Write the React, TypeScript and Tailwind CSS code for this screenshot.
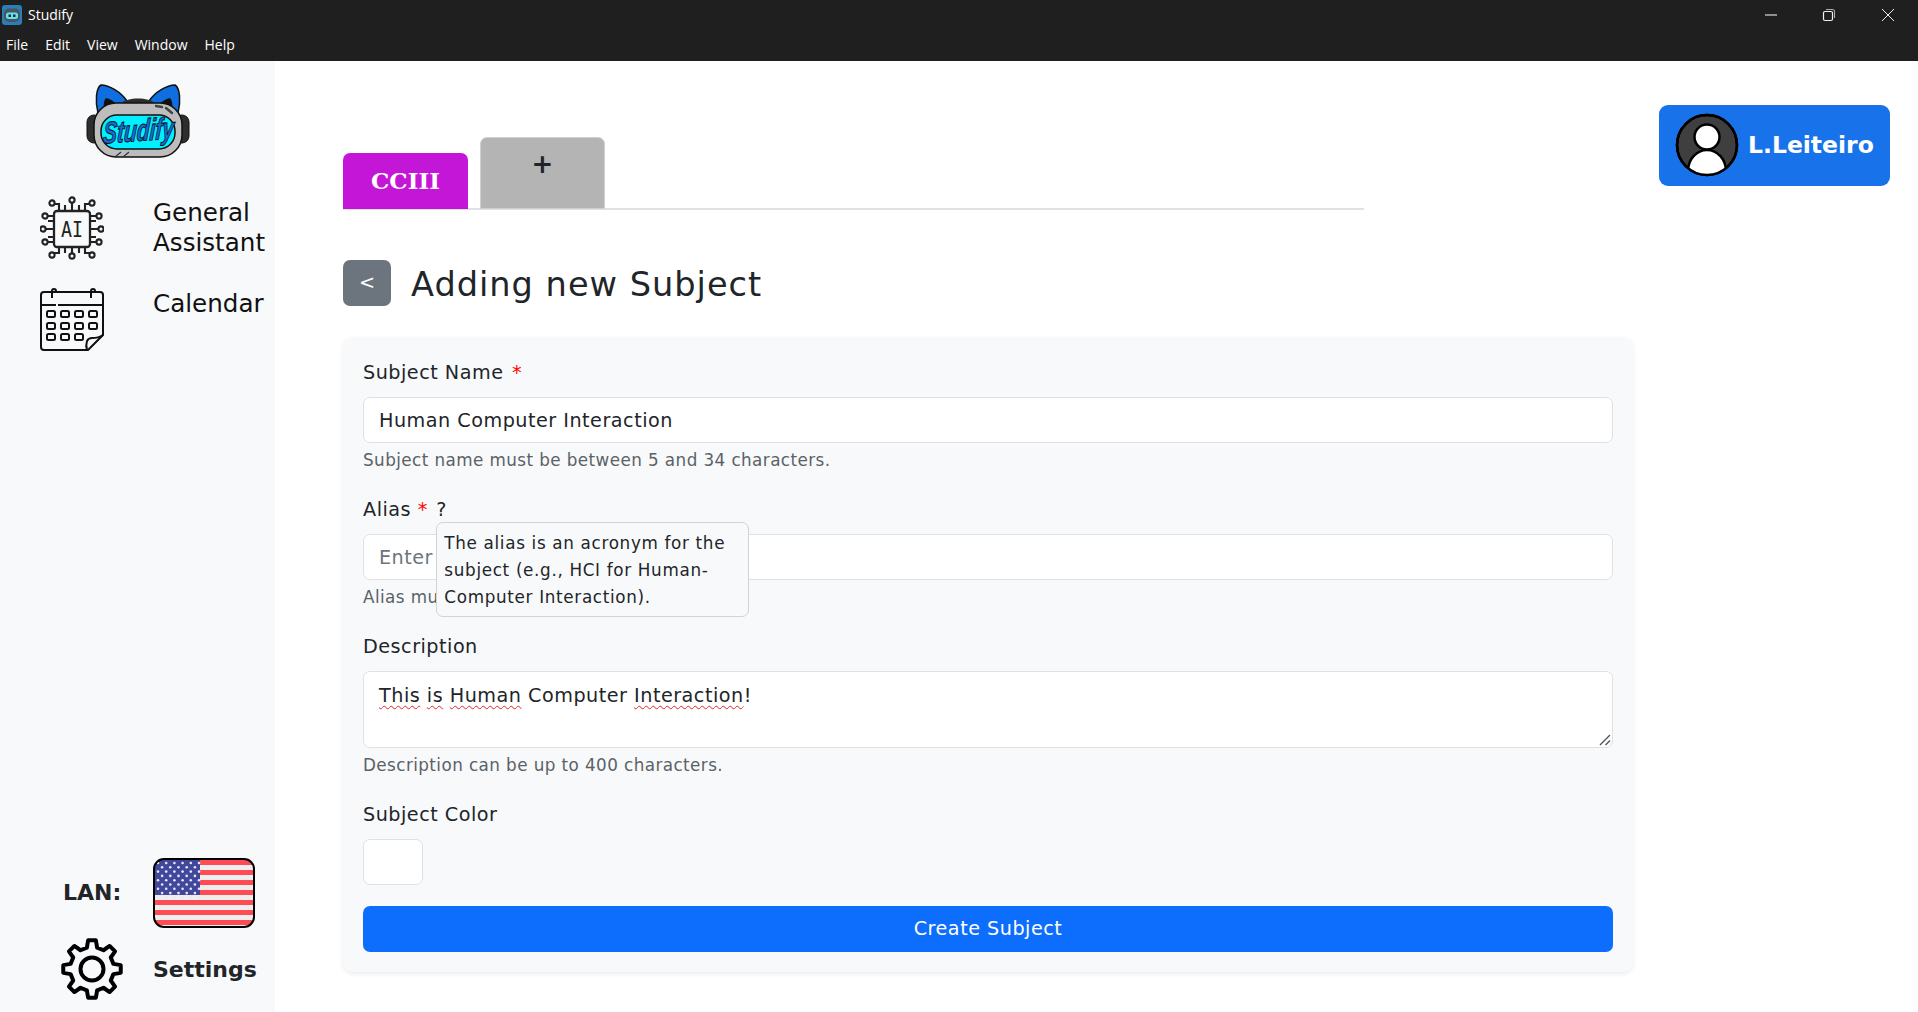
import React from "react";

const gearPath = (() => {
  const teeth = 8;
  const pts: string[] = [];
  for (let i = 0; i < teeth; i++) {
    const a = (i * Math.PI * 2) / teeth - Math.PI / 2;
    const step = (Math.PI * 2) / teeth;
    const ring: [number, number][] = [
      [22, a - step * 0.3],
      [29, a - step * 0.17],
      [29, a + step * 0.17],
      [22, a + step * 0.3],
    ];
    ring.forEach(([r, t]) => {
      pts.push(`${(32 + r * Math.cos(t)).toFixed(2)} ${(32 + r * Math.sin(t)).toFixed(2)}`);
    });
  }
  return `M${pts.join("L")}Z`;
})();

const AppIcon = () => (
  <svg width="20" height="20" viewBox="0 0 20 20" className="ml-[2px] mr-[6px]">
    <rect width="20" height="20" rx="3" fill="#2a7fb8" />
    <rect x="2" y="3.5" width="16" height="13.5" rx="5" fill="#4a5560" />
    <rect x="4" y="7.5" width="12" height="6.5" rx="2.5" fill="#5fe3ee" />
    <rect x="6.5" y="9.5" width="2.5" height="2.5" fill="#1c2b33" />
    <rect x="11" y="9.5" width="2.5" height="2.5" fill="#1c2b33" />
  </svg>
);

const WindowControls = () => (
  <div className="flex items-center">
    <svg width="14" height="14" viewBox="0 0 14 14" className="mr-[44px]">
      <path d="M1 7h12" stroke="#fff" strokeWidth="1" />
    </svg>
    <svg width="14" height="14" viewBox="0 0 14 14" className="mr-[45px]">
      <rect x="1.5" y="3.5" width="9" height="9" rx="1.5" fill="none" stroke="#eee" strokeWidth="1.2" />
      <path d="M4 1.5h6.5a2 2 0 0 1 2 2V10" fill="none" stroke="#aaa" strokeWidth="1.1" />
    </svg>
    <svg width="14" height="14" viewBox="0 0 14 14" className="mr-[23px]">
      <path d="M1 1l12 12M13 1L1 13" stroke="#eee" strokeWidth="1" />
    </svg>
  </div>
);

const Logo = () => (
  <svg width="104" height="76" viewBox="0 0 104 76">
    <path d="M12 30C9 18 10 5 15 2c8 0 20 7 26 16L20 30Z" fill="#0f6fe0" stroke="#111" strokeWidth="1.5" />
    <path d="M92 30c3-12 2-25-3-28-8 0-20 7-26 16l21 12Z" fill="#0f6fe0" stroke="#111" strokeWidth="1.5" />
    <path d="M18 28c-1-6 0-11 2-13 5 1 10 5 14 9Z" fill="#111" />
    <path d="M86 28c1-6 0-11-2-13-5 1-10 5-14 9Z" fill="#111" />
    <path d="M36 20c4-6 28-6 32 0v6H36Z" fill="#2d2d2d" />
    <rect x="1" y="32" width="14" height="28" rx="7" fill="#2e2e2e" stroke="#111" />
    <rect x="89" y="32" width="14" height="28" rx="7" fill="#2e2e2e" stroke="#111" />
    <rect x="8" y="20" width="88" height="54" rx="22" fill="#bdbdbd" stroke="#111" strokeWidth="1.5" />
    <rect x="15" y="32" width="74" height="34" rx="16" fill="#00f0ff" stroke="#111" strokeWidth="1.5" />
    <path d="M70 23l6 1M80 25l6 5" stroke="#444" strokeWidth="2.4" strokeLinecap="round" />
    <path d="M29 74l6-5M37 74l6-5" stroke="#333" strokeWidth="1.2" />
    <text
      x="0"
      y="0"
      textAnchor="middle"
      fontFamily="Liberation Sans, sans-serif"
      fontWeight="700"
      fontStyle="italic"
      fontSize="21"
      fill="#0f6fe0"
      stroke="#111"
      strokeWidth="0.7"
      transform="translate(52 58) rotate(-4) skewX(-8) scale(1 1.45)"
    >
      Studify
    </text>
  </svg>
);

const AiIcon = () => (
  <svg width="64" height="64" viewBox="0 0 64 64" fill="none" stroke="#222" strokeWidth="2.1">
    <rect x="14" y="15" width="36" height="36" rx="3" strokeWidth="2.3" />
    <text
      x="32"
      y="41"
      textAnchor="middle"
      fontFamily="DejaVu Sans Mono, monospace"
      fontSize="22"
      fill="#222"
      stroke="none"
      textLength="22"
      lengthAdjust="spacingAndGlyphs"
    >
      AI
    </text>
    <path d="M25 15V9M32 15V6M39 15V9M25 51v6M32 51v6M39 51v6M14 25H8M14 33H5M14 41H8M50 25h6M50 33h9M50 41h6" />
    <path d="M19 15V8h-5M45 15V8h5M19 51v6h-5M45 51v6h5M14 20H7M50 20h7M14 46H7M50 46h7" />
    <g fill="#f8f9fa">
      <circle cx="12" cy="7" r="2.6" />
      <circle cx="32" cy="4" r="2.6" />
      <circle cx="52" cy="7" r="2.6" />
      <circle cx="12" cy="59" r="2.6" />
      <circle cx="32" cy="60" r="2.6" />
      <circle cx="52" cy="59" r="2.6" />
      <circle cx="3" cy="33" r="2.6" />
      <circle cx="61" cy="33" r="2.6" />
      <circle cx="5" cy="20" r="2.6" />
      <circle cx="59" cy="20" r="2.6" />
      <circle cx="5" cy="46" r="2.6" />
      <circle cx="59" cy="46" r="2.6" />
    </g>
  </svg>
);

const CalendarIcon = () => {
  const cells = [0, 1, 2, 3];
  return (
    <svg width="64" height="65" viewBox="0 0 64 65" fill="none" stroke="#111" strokeWidth="2">
      <path d="M48 62H4a3 3 0 0 1-3-3V7a3 3 0 0 1 3-3h56a3 3 0 0 1 3 3v40Z" strokeLinejoin="round" />
      <path d="M47 62c-1-3-1-6 0-9 1-2 3-3 5-3 4 0 8-1 11-3" />
      <path d="M1 17h15M18 17h45" />
      <path d="M12 10V3a2 2 0 0 1 4 0M51 10V3a2 2 0 0 1 4 0" />
      {[23, 35, 46].map((y, row) =>
        cells.map((c) =>
          row === 2 && c === 3 ? null : <rect key={`${y}-${c}`} x={7 + c * 14} y={y} width="8" height="6" rx="1.5" />
        )
      )}
    </svg>
  );
};

const Flag = () => {
  const stripes = Array.from({ length: 7 }, (_, i) => i);
  const stars: [number, number][] = [];
  for (let r = 0; r < 9; r++) {
    for (let c = 0; c < (r % 2 ? 5 : 6); c++) {
      stars.push([5 + c * 8.2 + (r % 2 ? 4.1 : 0), 5 + r * 4.3]);
    }
  }
  return (
    <svg width="102" height="70" viewBox="0 0 102 70">
      <clipPath id="flagClip">
        <rect x="1" y="1" width="100" height="68" rx="10" />
      </clipPath>
      <g clipPath="url(#flagClip)">
        <rect width="102" height="70" fill="#eeeeee" />
        {stripes.map((i) => (
          <rect key={i} x="0" y={2 + i * 10} width="102" height="5" fill="#ff4b55" />
        ))}
        <rect x="0" y="0" width="47" height="37" fill="#41479b" />
        {stars.map(([x, y]) => (
          <circle key={`${x}-${y}`} cx={x} cy={y} r="1.3" fill="#e8e8f4" />
        ))}
      </g>
      <rect x="1" y="1" width="100" height="68" rx="10" fill="none" stroke="#000" strokeWidth="2" />
    </svg>
  );
};

const Gear = () => (
  <svg width="64" height="64" viewBox="0 0 64 64" fill="none" stroke="#000" strokeWidth="4" strokeLinejoin="round">
    <path d={gearPath} />
    <circle cx="32" cy="32" r="11.5" />
  </svg>
);

const Avatar = () => (
  <svg width="64" height="64" viewBox="0 0 64 64" className="shrink-0 -mt-[2px]">
    <clipPath id="avatarClip">
      <circle cx="32" cy="32" r="29.5" />
    </clipPath>
    <circle cx="32" cy="32" r="30" fill="#3f3f3f" stroke="#000" strokeWidth="2.5" />
    <g clipPath="url(#avatarClip)">
      <ellipse cx="32" cy="58" rx="19" ry="21" fill="#fff" stroke="#000" strokeWidth="2.5" />
    </g>
    <circle cx="32" cy="24" r="12.5" fill="#fff" stroke="#000" strokeWidth="2.5" />
    <circle cx="32" cy="32" r="30" fill="none" stroke="#000" strokeWidth="2.5" />
  </svg>
);

const Sidebar = () => (
  <aside className="w-[275px] shrink-0 bg-[#f8f9fa] flex flex-col text-[#111] font-['DejaVu_Sans',sans-serif]">
    <div className="flex justify-center pt-[22px]">
      <Logo />
    </div>
    <div className="flex gap-[49px] pl-[40px] mt-[37px]">
      <AiIcon />
      <span className="text-[24.6px] leading-[30px] pt-[2px] whitespace-nowrap">
        General
        <br />
        Assistant
      </span>
    </div>
    <div className="flex gap-[49px] pl-[40px] mt-[28px]">
      <CalendarIcon />
      <span className="text-[24.6px] leading-[30px] pt-[1px]">Calendar</span>
    </div>
    <div className="mt-auto flex items-center pb-[9px]">
      <span className="w-[153px] pl-[63px] pb-[2px] text-[22px] font-bold text-[#212529]">LAN:</span>
      <Flag />
    </div>
    <div className="flex items-center pb-[11px]">
      <div className="w-[153px] pl-[60px]">
        <Gear />
      </div>
      <span className="text-[22px] font-bold text-[#212529]">Settings</span>
    </div>
  </aside>
);

const fieldClass =
  "block w-full h-[46px] px-[15px] bg-white border border-[#dee2e6] rounded-[7px] text-[19.2px] tracking-[0.5px] text-[#212529] placeholder:text-[#6c757d] outline-none";

const Label = ({ children }: { children: React.ReactNode }) => (
  <label className="block text-[19.2px] tracking-[0.5px] leading-[29px] mb-[10px] text-[#212529]">{children}</label>
);

const Hint = ({ children }: { children: React.ReactNode }) => (
  <p className="mt-[5px] text-[16.8px] tracking-[0.42px] leading-[25px] text-[#5a6268]">{children}</p>
);

const Squiggle = ({ children }: { children: React.ReactNode }) => (
  <span className="underline decoration-wavy decoration-[#e0262c] decoration-1 underline-offset-[3px]">{children}</span>
);

const App = () => {
  return (
    <div className="h-screen flex flex-col overflow-hidden bg-white">
      <header className="h-[61px] shrink-0 bg-[#1f1f1f] text-white font-['Open_Sans',sans-serif] text-[14px]">
        <div className="h-[29px] flex items-center justify-between">
          <div className="flex items-center">
            <AppIcon />
            <span>Studify</span>
          </div>
          <WindowControls />
        </div>
        <nav className="flex gap-[17px] pl-[6px] pt-[5px] leading-[22px]">
          <span>File</span>
          <span>Edit</span>
          <span>View</span>
          <span>Window</span>
          <span>Help</span>
        </nav>
      </header>

      <div className="flex flex-1 min-h-0">
        <Sidebar />
        <main className="flex-1 flex font-['DejaVu_Sans',sans-serif] text-[#212529]">
          <div className="w-[1290px] ml-[68px] shrink-0">
            <div className="w-[1021px] mt-[76px] h-[73px] flex items-end gap-[12px] border-b-2 border-[#dee2e6]">
              <div className="w-[125px] h-[56px] -mb-[1px] rounded-t-[7px] bg-[#c316d6] text-white font-['DejaVu_Serif',serif] font-bold text-[23px] flex items-center justify-center pt-[1px]">
                CCIII
              </div>
              <div className="w-[125px] h-[72px] -mb-[1px] rounded-t-[7px] bg-[#b4b4b4] border border-[#d0d0d0] text-[26px] font-bold flex justify-center pt-[11px] leading-[30px]">
                +
              </div>
            </div>

            <div className="flex items-center mt-[50px] gap-[20px]">
              <button className="w-[48px] h-[46px] rounded-[7px] bg-[#6c757d] text-white text-[19.2px]">&lt;</button>
              <h1 className="text-[33.6px] tracking-[1px] leading-[42px] pt-[4px]">Adding new Subject</h1>
            </div>

            <form className="mt-[31px] bg-[#f8f9fa] rounded-[10px] shadow-[0_2px_5px_rgba(0,0,0,0.08)] px-[20px] pt-[21px] pb-[20px]">
              <div className="mb-[22px]">
                <Label>
                  Subject Name <span className="text-[#ff0000] ml-[2px]">*</span>
                </Label>
                <input className={fieldClass} readOnly defaultValue="Human Computer Interaction" />
                <Hint>Subject name must be between 5 and 34 characters.</Hint>
              </div>

              <div className="mb-[22px]">
                <Label>
                  Alias <span className="text-[#ff0000]">*</span>{" "}
                  <span className="relative ml-[2px]">
                    ?
                    <span className="absolute left-0 top-[24px] z-10 w-[313px] h-[95px] px-[7px] pt-[7px] bg-[#f8f9fa] border border-[#ced4da] rounded-[7px] text-[16.8px] tracking-[0.67px] leading-[27px]">
                      The alias is an acronym for the subject (e.g., HCI for Human-Computer Interaction).
                    </span>
                  </span>
                </Label>
                <input className={fieldClass} readOnly placeholder="Enter alias" />
                <Hint>Alias must be up to 5 characters.</Hint>
              </div>

              <div className="mb-[22px]">
                <Label>Description</Label>
                <div className="relative h-[77px] px-[15px] pt-[9px] bg-white border border-[#dee2e6] rounded-[7px] text-[19.2px] tracking-[0.5px] leading-[29px]">
                  <Squiggle>This</Squiggle> <Squiggle>is</Squiggle> <Squiggle>Human</Squiggle> Computer{" "}
                  <Squiggle>Interaction</Squiggle>!
                  <svg width="12" height="12" viewBox="0 0 12 12" className="absolute right-[1px] bottom-[1px]">
                    <path d="M1 11L11 1M6.5 11L11 6.5" stroke="#555" strokeWidth="1.4" />
                  </svg>
                </div>
                <Hint>Description can be up to 400 characters.</Hint>
              </div>

              <div className="mb-[21px]">
                <Label>Subject Color</Label>
                <div className="w-[60px] h-[46px] bg-white border border-[#dee2e6] rounded-[7px]" />
              </div>

              <button type="button" className="w-full h-[46px] rounded-[7px] bg-[#0d6efd] text-white text-[19.2px] tracking-[0.5px]">
                Create Subject
              </button>
            </form>
          </div>

          <div className="ml-auto mr-[28px] mt-[44px] w-[231px] h-[81px] rounded-[9px] bg-[#1873ea] flex items-center pl-[16px] gap-[9px] text-white font-bold text-[23.5px]">
            <Avatar />
            <span>L.Leiteiro</span>
          </div>
        </main>
      </div>
    </div>
  );
};

export default App;
